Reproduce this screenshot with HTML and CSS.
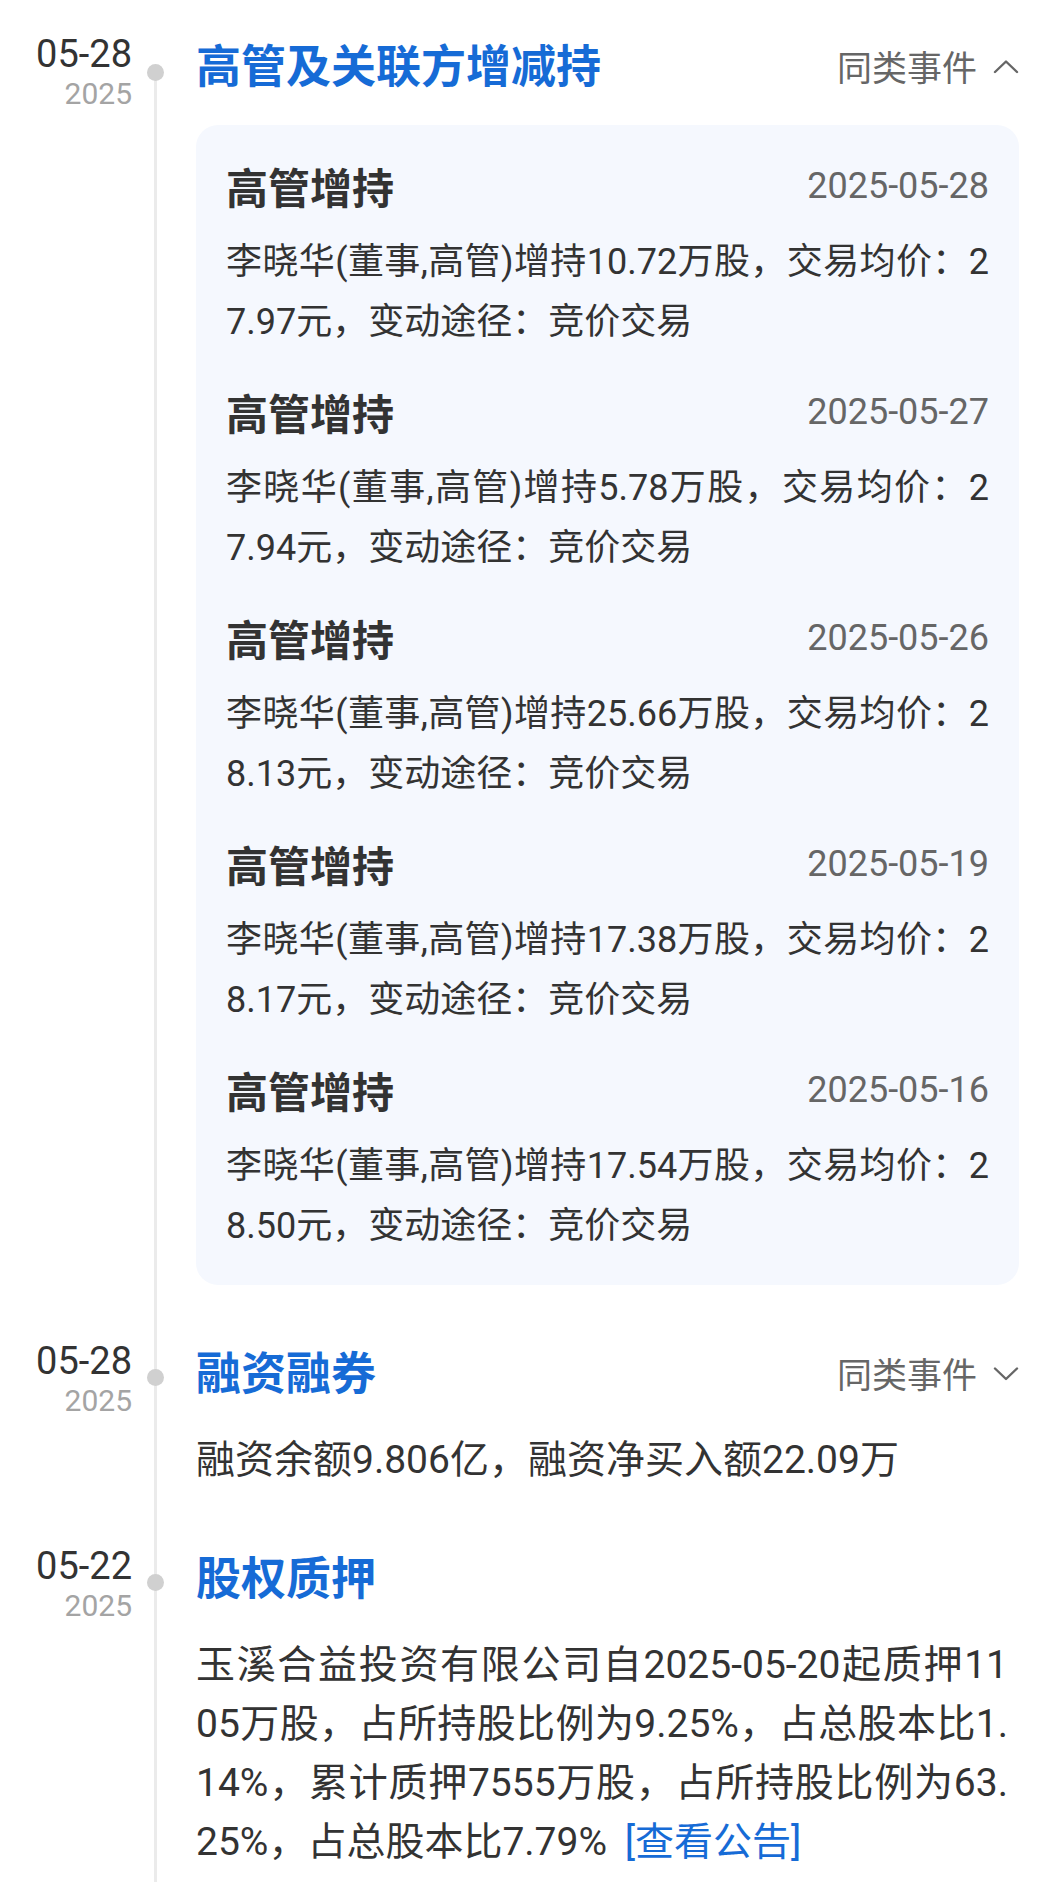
FILE: index.html
```html
<!DOCTYPE html>
<html lang="zh-CN">
<head>
<meta charset="utf-8">
<title>公司大事</title>
<link rel="stylesheet" href="styles.css">
</head>
<body>
<main class="timeline">

  <section class="event first">
    <div class="when"><div class="md">05-28</div><div class="yr">2025</div></div>
    <div class="rail"><span class="dot"></span></div>
    <div class="content">
      <header class="head">
        <h2 class="title">高管及关联方增减持</h2>
        <button class="toggle" type="button">同类事件<svg class="chev" width="26" height="15" viewBox="0 0 26 15"><polyline points="2,13 13,2.5 24,13"/></svg></button>
      </header>
      <div class="card">
        <article class="item">
          <div class="item-head"><h3 class="item-title">高管增持</h3><time class="item-date">2025-05-28</time></div>
          <p class="desc"><span class="ln">李晓华(董事,高管)增持10.72万股，交易均价：2</span><span class="ln">7.97元，变动途径：竞价交易</span></p>
        </article>
        <article class="item">
          <div class="item-head"><h3 class="item-title">高管增持</h3><time class="item-date">2025-05-27</time></div>
          <p class="desc"><span class="ln">李晓华(董事,高管)增持5.78万股，交易均价：2</span><span class="ln">7.94元，变动途径：竞价交易</span></p>
        </article>
        <article class="item">
          <div class="item-head"><h3 class="item-title">高管增持</h3><time class="item-date">2025-05-26</time></div>
          <p class="desc"><span class="ln">李晓华(董事,高管)增持25.66万股，交易均价：2</span><span class="ln">8.13元，变动途径：竞价交易</span></p>
        </article>
        <article class="item">
          <div class="item-head"><h3 class="item-title">高管增持</h3><time class="item-date">2025-05-19</time></div>
          <p class="desc"><span class="ln">李晓华(董事,高管)增持17.38万股，交易均价：2</span><span class="ln">8.17元，变动途径：竞价交易</span></p>
        </article>
        <article class="item">
          <div class="item-head"><h3 class="item-title">高管增持</h3><time class="item-date">2025-05-16</time></div>
          <p class="desc"><span class="ln">李晓华(董事,高管)增持17.54万股，交易均价：2</span><span class="ln">8.50元，变动途径：竞价交易</span></p>
        </article>
      </div>
    </div>
  </section>

  <section class="event">
    <div class="when"><div class="md">05-28</div><div class="yr">2025</div></div>
    <div class="rail"><span class="dot"></span></div>
    <div class="content">
      <header class="head">
        <h2 class="title">融资融券</h2>
        <button class="toggle" type="button">同类事件<svg class="chev" width="26" height="15" viewBox="0 0 26 15"><polyline points="2,2.5 13,13 24,2.5"/></svg></button>
      </header>
      <p class="text">融资余额9.806亿，融资净买入额22.09万</p>
    </div>
  </section>

  <section class="event last">
    <div class="when"><div class="md">05-22</div><div class="yr">2025</div></div>
    <div class="rail"><span class="dot"></span></div>
    <div class="content">
      <header class="head">
        <h2 class="title">股权质押</h2>
      </header>
      <p class="text multi"><span class="ln">玉溪合益投资有限公司自2025-05-20起质押11</span><span class="ln">05万股，占所持股比例为9.25%，占总股本比1.</span><span class="ln">14%，累计质押7555万股，占所持股比例为63.</span><span class="ln">25%，占总股本比7.79% <a class="link" href="#">[查看公告]</a></span></p>
    </div>
  </section>

</main>
</body>
</html>
```

FILE: styles.css
```css
html, body {
  margin: 0;
  padding: 0;
  background: #ffffff;
}

body {
  font-family: Roboto, "Noto Sans CJK SC", sans-serif;
  color: #333333;
}

.timeline {
  padding-top: 34px;
}

.event {
  display: grid;
  grid-template-columns: 132px 46px 1fr;
}

.when {
  text-align: right;
}

.md {
  font-size: 38px;
  line-height: 40px;
  color: #333333;
}

.yr {
  font-size: 30px;
  line-height: 40px;
  color: #a4a4a4;
}

.rail {
  background: linear-gradient(#ebebeb, #ebebeb) no-repeat center top / 3px 100%;
}

.first .rail {
  background-position: center bottom;
  background-size: 3px calc(100% - 38px);
}

.dot {
  display: block;
  width: 17px;
  height: 17px;
  margin: 28px auto 0;
  border-radius: 50%;
  background: #d0d0d0;
}

.first .dot {
  margin-top: 30px;
}

.content {
  padding: 0 38px 56px 18px;
  min-width: 0;
}

.last .content {
  padding-bottom: 40px;
}

.head {
  display: flex;
  justify-content: space-between;
  align-items: center;
  height: 60px;
}

.title {
  margin: 0;
  font-family: "Noto Sans CJK SC", sans-serif;
  font-size: 45px;
  line-height: 60px;
  font-weight: 700;
  color: #166bd6;
}

.toggle {
  display: flex;
  align-items: center;
  gap: 16px;
  padding: 4px 0 0;
  border: 0;
  background: none;
  font-family: "Noto Sans CJK SC", sans-serif;
  font-size: 35px;
  line-height: 50px;
  color: #666666;
}

.chev {
  display: block;
}

.chev polyline {
  fill: none;
  stroke: #666666;
  stroke-width: 2.4;
  stroke-linecap: round;
  stroke-linejoin: round;
}

.card {
  margin-top: 31px;
  padding: 33px 30px 29px;
  border-radius: 22px;
  background: #f5f8fe;
  display: flex;
  flex-direction: column;
  gap: 32px;
}

.item-head {
  display: flex;
  justify-content: space-between;
  align-items: center;
  height: 56px;
}

.item-title {
  margin: 0;
  font-family: "Noto Sans CJK SC", sans-serif;
  font-size: 42px;
  line-height: 56px;
  font-weight: 700;
  color: #333333;
}

.item-date {
  font-size: 36px;
  line-height: 56px;
  color: #666666;
}

.desc {
  margin: 18px 0 0;
  font-size: 36px;
  line-height: 60px;
}

.ln {
  display: block;
  text-align: justify;
  text-align-last: justify;
}

.ln:last-child {
  text-align-last: auto;
}

.text {
  margin: 29px 0 0;
  font-size: 39px;
  line-height: 60px;
}

.text.multi {
  margin-top: 30px;
  line-height: 59px;
  padding-right: 11px;
}

.link {
  margin-left: 8px;
  color: #166bd6;
  text-decoration: none;
}
```
